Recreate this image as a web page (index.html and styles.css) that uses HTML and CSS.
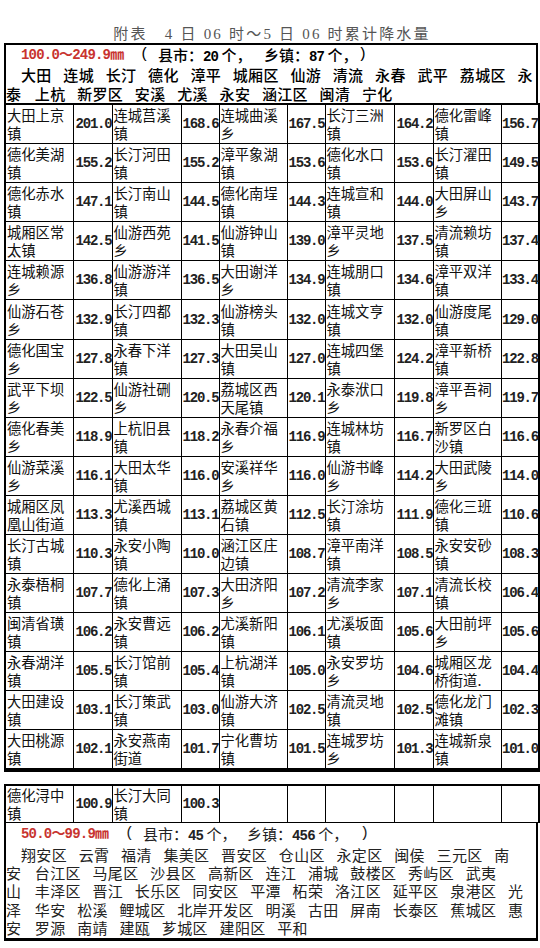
FILE: index.html
```html
<!DOCTYPE html>
<html lang="zh-CN">
<head>
<meta charset="utf-8">
<title>附表 累计降水量</title>
<link rel="stylesheet" href="styles.css">
</head>
<body>
<div class="page">
  <h1 class="title">附表　4 日 06 时～5 日 06 时累计降水量</h1>

  <section class="block block-top">
    <div class="summary summary-strong">
      <div class="line indent lead lead-a">
        <span class="range">100.0～249.9㎜</span>
        <span class="paren">(</span>
        <span class="count count-1">县市：<span class="num">20</span> 个，</span>
        <span class="count count-2">乡镇：<span class="num">87</span> 个，</span>
        <span class="paren">)</span>
      </div>
      <div class="line indent"><span>大田</span><span>连城</span><span>长汀</span><span>德化</span><span>漳平</span><span>城厢区</span><span>仙游</span><span>清流</span><span>永春</span><span>武平</span><span>荔城区</span><span>永</span></div>
      <div class="line"><span class="one">泰</span><span>上杭</span><span>新罗区</span><span>安溪</span><span>尤溪</span><span>永安</span><span>涵江区</span><span>闽清</span><span>宁化</span></div>
    </div>
    <table class="grid grid-main">
      <colgroup>
        <col class="c-nm"><col class="c-v1"><col class="c-nm2"><col class="c-v2"><col class="c-nm"><col class="c-v2"><col class="c-nm2"><col class="c-v1"><col class="c-nm"><col class="c-v2">
      </colgroup>
      <tbody>
        <tr><td class="nm">大田上京镇</td><td class="val">201.0</td><td class="nm">连城莒溪镇</td><td class="val">168.6</td><td class="nm">连城曲溪乡</td><td class="val">167.5</td><td class="nm">长汀三洲镇</td><td class="val">164.2</td><td class="nm">德化雷峰镇</td><td class="val">156.7</td></tr>
        <tr><td class="nm">德化美湖镇</td><td class="val">155.2</td><td class="nm">长汀河田镇</td><td class="val">155.2</td><td class="nm">漳平象湖镇</td><td class="val">153.6</td><td class="nm">德化水口镇</td><td class="val">153.6</td><td class="nm">长汀濯田镇</td><td class="val">149.5</td></tr>
        <tr><td class="nm">德化赤水镇</td><td class="val">147.1</td><td class="nm">长汀南山镇</td><td class="val">144.5</td><td class="nm">德化南埕镇</td><td class="val">144.3</td><td class="nm">连城宣和镇</td><td class="val">144.0</td><td class="nm">大田屏山乡</td><td class="val">143.7</td></tr>
        <tr><td class="nm">城厢区常太镇</td><td class="val">142.5</td><td class="nm">仙游西苑乡</td><td class="val">141.5</td><td class="nm">仙游钟山镇</td><td class="val">139.0</td><td class="nm">漳平灵地乡</td><td class="val">137.5</td><td class="nm">清流赖坊镇</td><td class="val">137.4</td></tr>
        <tr><td class="nm">连城赖源乡</td><td class="val">136.8</td><td class="nm">仙游游洋镇</td><td class="val">136.5</td><td class="nm">大田谢洋乡</td><td class="val">134.9</td><td class="nm">连城朋口镇</td><td class="val">134.6</td><td class="nm">漳平双洋镇</td><td class="val">133.4</td></tr>
        <tr><td class="nm">仙游石苍乡</td><td class="val">132.9</td><td class="nm">长汀四都镇</td><td class="val">132.3</td><td class="nm">仙游榜头镇</td><td class="val">132.0</td><td class="nm">连城文亨镇</td><td class="val">132.0</td><td class="nm">仙游度尾镇</td><td class="val">129.0</td></tr>
        <tr><td class="nm">德化国宝乡</td><td class="val">127.8</td><td class="nm">永春下洋镇</td><td class="val">127.3</td><td class="nm">大田吴山镇</td><td class="val">127.0</td><td class="nm">连城四堡镇</td><td class="val">124.2</td><td class="nm">漳平新桥镇</td><td class="val">122.8</td></tr>
        <tr><td class="nm">武平下坝乡</td><td class="val">122.5</td><td class="nm">仙游社硎乡</td><td class="val">120.5</td><td class="nm">荔城区西天尾镇</td><td class="val">120.1</td><td class="nm">永泰洑口乡</td><td class="val">119.8</td><td class="nm">漳平吾祠乡</td><td class="val">119.7</td></tr>
        <tr><td class="nm">德化春美乡</td><td class="val">118.9</td><td class="nm">上杭旧县镇</td><td class="val">118.2</td><td class="nm">永春介福乡</td><td class="val">116.9</td><td class="nm">连城林坊镇</td><td class="val">116.7</td><td class="nm">新罗区白沙镇</td><td class="val">116.6</td></tr>
        <tr><td class="nm">仙游菜溪乡</td><td class="val">116.1</td><td class="nm">大田太华镇</td><td class="val">116.0</td><td class="nm">安溪祥华乡</td><td class="val">116.0</td><td class="nm">仙游书峰乡</td><td class="val">114.2</td><td class="nm">大田武陵乡</td><td class="val">114.0</td></tr>
        <tr><td class="nm">城厢区凤凰山街道</td><td class="val">113.3</td><td class="nm">尤溪西城镇</td><td class="val">113.1</td><td class="nm">荔城区黄石镇</td><td class="val">112.5</td><td class="nm">长汀涂坊镇</td><td class="val">111.9</td><td class="nm">德化三班镇</td><td class="val">110.6</td></tr>
        <tr><td class="nm">长汀古城镇</td><td class="val">110.3</td><td class="nm">永安小陶镇</td><td class="val">110.0</td><td class="nm">涵江区庄边镇</td><td class="val">108.7</td><td class="nm">漳平南洋镇</td><td class="val">108.5</td><td class="nm">永安安砂镇</td><td class="val">108.3</td></tr>
        <tr><td class="nm">永泰梧桐镇</td><td class="val">107.7</td><td class="nm">德化上涌镇</td><td class="val">107.3</td><td class="nm">大田济阳乡</td><td class="val">107.2</td><td class="nm">清流李家乡</td><td class="val">107.1</td><td class="nm">清流长校镇</td><td class="val">106.4</td></tr>
        <tr><td class="nm">闽清省璜镇</td><td class="val">106.2</td><td class="nm">永安曹远镇</td><td class="val">106.2</td><td class="nm">尤溪新阳镇</td><td class="val">106.1</td><td class="nm">尤溪坂面镇</td><td class="val">105.6</td><td class="nm">大田前坪乡</td><td class="val">105.6</td></tr>
        <tr><td class="nm">永春湖洋镇</td><td class="val">105.5</td><td class="nm">长汀馆前镇</td><td class="val">105.4</td><td class="nm">上杭湖洋镇</td><td class="val">105.0</td><td class="nm">永安罗坊乡</td><td class="val">104.6</td><td class="nm">城厢区龙桥街道.</td><td class="val">104.4</td></tr>
        <tr><td class="nm">大田建设镇</td><td class="val">103.1</td><td class="nm">长汀策武镇</td><td class="val">103.0</td><td class="nm">仙游大济镇</td><td class="val">102.5</td><td class="nm">清流灵地镇</td><td class="val">102.5</td><td class="nm">德化龙门滩镇</td><td class="val">102.3</td></tr>
        <tr><td class="nm">大田桃源镇</td><td class="val">102.1</td><td class="nm">永安燕南街道</td><td class="val">101.7</td><td class="nm">宁化曹坊镇</td><td class="val">101.5</td><td class="nm">连城罗坊乡</td><td class="val">101.3</td><td class="nm">连城新泉镇</td><td class="val">101.0</td></tr>
      </tbody>
    </table>
  </section>

  <section class="block block-bottom">
    <table class="grid grid-tail">
      <colgroup>
        <col class="c-nm"><col class="c-v1"><col class="c-nm2"><col class="c-v2"><col class="c-nm"><col class="c-v2"><col class="c-nm2"><col class="c-v1"><col class="c-nm"><col class="c-v2">
      </colgroup>
      <tbody>
        <tr><td class="nm">德化浔中镇</td><td class="val">100.9</td><td class="nm">长汀大同镇</td><td class="val">100.3</td><td></td><td></td><td></td><td></td><td></td><td></td></tr>
      </tbody>
    </table>
    <div class="summary summary-light">
      <div class="line indent lead lead-b">
        <span class="range">50.0～99.9㎜</span>
        <span class="paren">(</span>
        <span class="count count-1">县市：<span class="num">45</span> 个，</span>
        <span class="count count-2">乡镇：<span class="num">456</span> 个，</span>
        <span class="paren">)</span>
      </div>
      <div class="line indent"><span>翔安区</span><span>云霄</span><span>福清</span><span>集美区</span><span>晋安区</span><span>仓山区</span><span>永定区</span><span>闽侯</span><span>三元区</span><span>南</span></div>
      <div class="line"><span class="one">安</span><span>台江区</span><span>马尾区</span><span>沙县区</span><span>高新区</span><span>连江</span><span>浦城</span><span>鼓楼区</span><span>秀屿区</span><span>武夷</span></div>
      <div class="line"><span class="one">山</span><span>丰泽区</span><span>晋江</span><span>长乐区</span><span>同安区</span><span>平潭</span><span>柘荣</span><span>洛江区</span><span>延平区</span><span>泉港区</span><span>光</span></div>
      <div class="line"><span class="one">泽</span><span>华安</span><span>松溪</span><span>鲤城区</span><span>北岸开发区</span><span>明溪</span><span>古田</span><span>屏南</span><span>长泰区</span><span>蕉城区</span><span>惠</span></div>
      <div class="line"><span class="one">安</span><span>罗源</span><span>南靖</span><span>建瓯</span><span>芗城区</span><span>建阳区</span><span>平和</span></div>
    </div>
  </section>
</div>
</body>
</html>
```

FILE: styles.css
```css
* { box-sizing: border-box; }

html, body {
  margin: 0;
  padding: 0;
  background: #ffffff;
}

body {
  font-family: "Noto Sans CJK SC", sans-serif;
  color: #111111;
}

.page {
  width: 540px;
  height: 948px;
  padding-left: 4px;
  overflow: hidden;
}

.title {
  margin: 0;
  height: 43px;
  padding-top: 26px;
  line-height: 17px;
  text-align: center;
  font-family: "Liberation Serif", "Noto Sans CJK SC", serif;
  font-size: 15px;
  font-weight: 400;
  letter-spacing: 2.2px;
  color: #555555;
}

.block {
  width: 534px;
}

.block-bottom {
  margin-top: 12px;
}

/* summary boxes */
.summary {
  border-left: 2px solid #000;
  border-right: 2px solid #000;
  font-size: 15px;
  line-height: 18.4px;
  letter-spacing: 0.35px;
}

.summary-strong {
  border-top: 2px solid #000;
  padding-top: 1px;
  font-weight: 500;
  color: #000;
}

.summary-light {
  border-bottom: 3px solid #000;
  padding-top: 2px;
  font-weight: 400;
  color: #222;
}

.line {
  display: flex;
  gap: 11.65px;
  white-space: nowrap;
}

.line > span { flex: none; }

.line .one { margin-right: 1.8px; }

.indent { padding-left: 15px; }

.lead { gap: 0; }

.range {
  color: #c8342f;
  font-family: "Liberation Mono", "Noto Sans CJK SC", monospace;
  font-weight: 700;
}

.range, .num {
  font-size: 14px;
  letter-spacing: -0.8px;
}

.num {
  font-family: "Liberation Mono", monospace;
  font-weight: 700;
}

.count { letter-spacing: 0; }

.paren {
  width: 18px;
  font-family: "Liberation Mono", monospace;
}

.lead-a .range { width: 119px; }
.lead-a .count-1 { width: 106px; }
.lead-a .count-2 { width: 94px; }

.lead-b .range { width: 104px; }
.lead-b .count-1 { width: 104px; }
.lead-b .count-2 { width: 113px; }

/* tables */
.grid {
  width: 534px;
  border-collapse: collapse;
  table-layout: fixed;
  border: 2px solid #000;
}

.grid-main {
  height: 669px;
  border-bottom: 4px solid #000;
}

.grid-tail {
  height: 39px;
  border-bottom: 1px solid #000;
}

.c-nm { width: 68px; }
.c-nm2 { width: 69px; }
.c-v1 { width: 39px; }
.c-v2 { width: 38px; }

.grid td {
  border: 1px solid #000;
  padding: 0;
  vertical-align: middle;
  font-size: 14.3px;
  line-height: 18px;
  color: #111;
}

.grid td.nm {
  padding-left: 1px;
  text-align: left;
  word-break: break-all;
}

.grid td.val {
  text-align: right;
  font-family: "Liberation Mono", monospace;
  font-size: 14px;
  font-weight: 700;
  letter-spacing: -1.2px;
  white-space: nowrap;
  color: #222;
}
```
